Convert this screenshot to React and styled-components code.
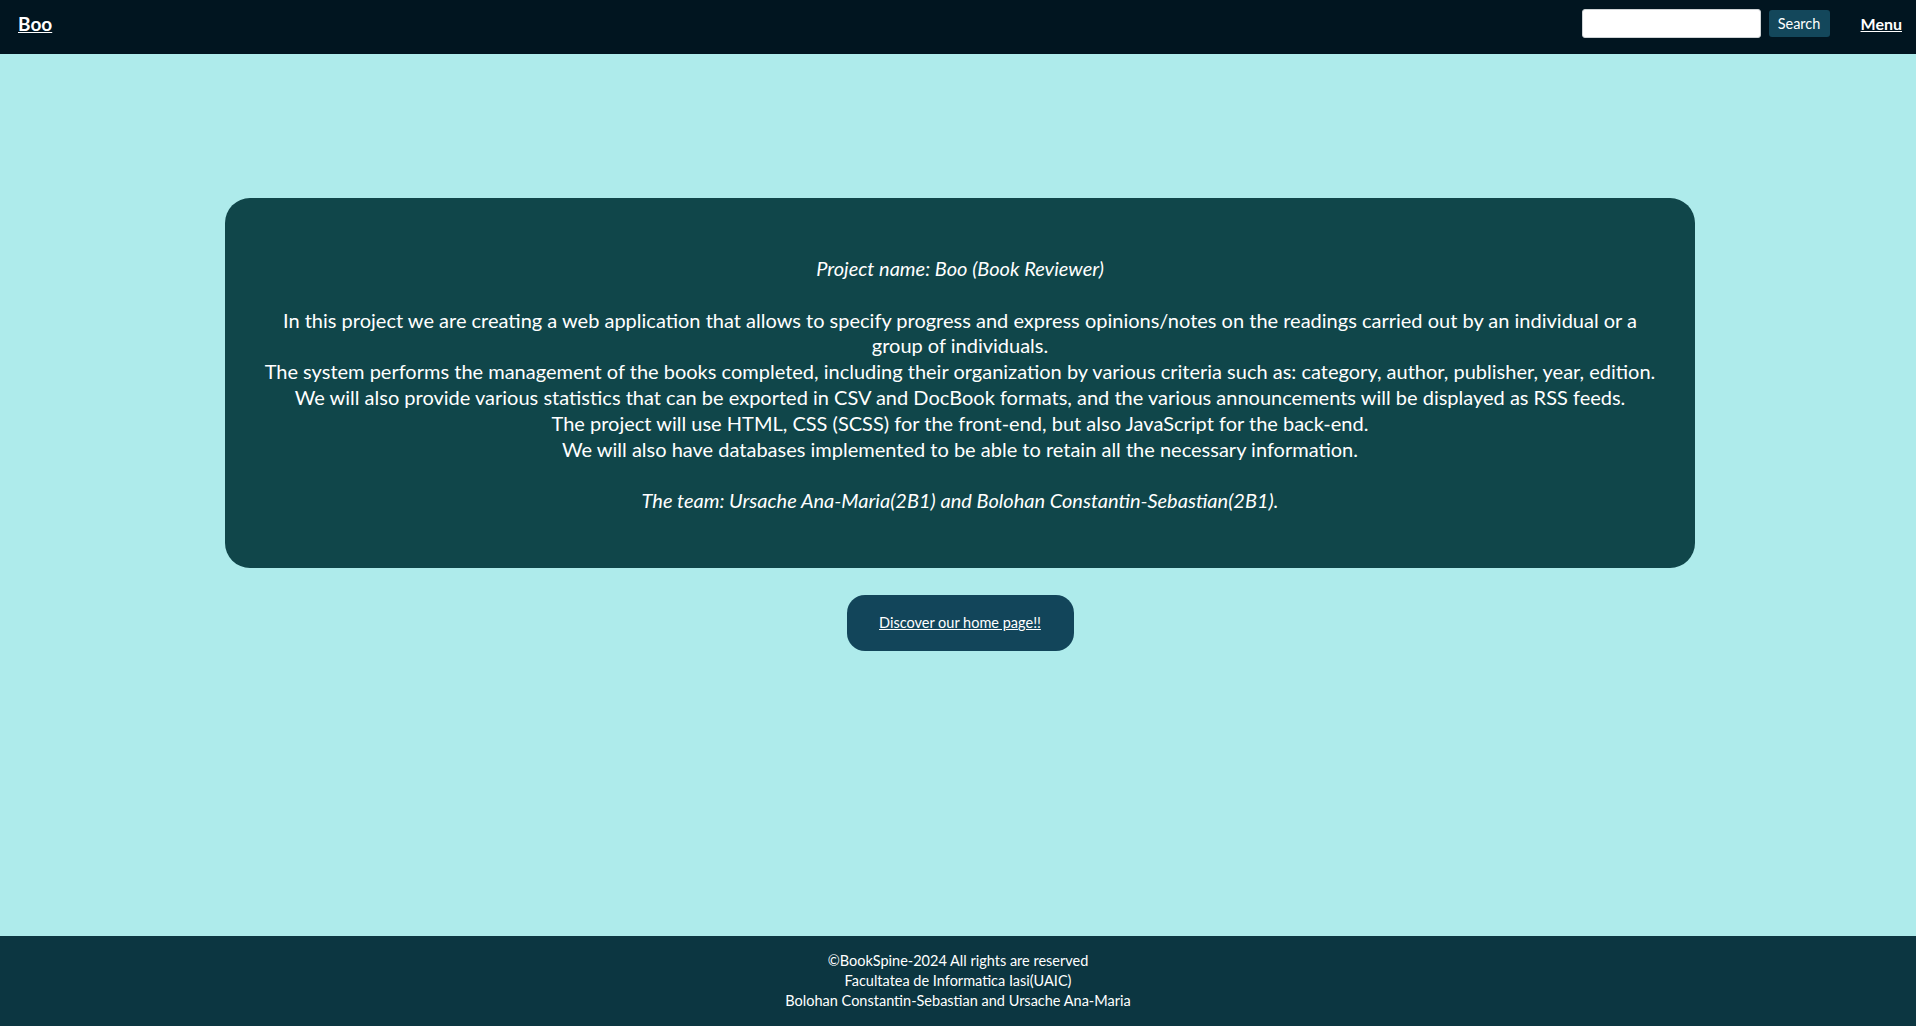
import React from 'react'
import styled, { createGlobalStyle } from 'styled-components'

const GlobalStyle = createGlobalStyle`
  * {
    box-sizing: border-box;
  }
  body {
    margin: 0;
    background: #aeebeb;
    font-family: 'Lato', 'Noto Sans', sans-serif;
    color: #ffffff;
  }
`

const Page = styled.div`
  display: flex;
  flex-direction: column;
  min-height: 100vh;
`

const Header = styled.header`
  height: 54px;
  background: #011520;
  display: flex;
  align-items: center;
  justify-content: space-between;
  padding: 0 14px 7px 18px;
`

const Brand = styled.a`
  color: #ffffff;
  font-weight: 700;
  font-size: 19px;
  text-decoration: underline;
`

const Tools = styled.div`
  display: flex;
  align-items: center;
`

const SearchInput = styled.input`
  width: 179px;
  height: 29px;
  border: 1px solid #cfd4d6;
  border-radius: 3px;
  background: #ffffff;
  margin-right: 8px;
`

const SearchButton = styled.button`
  width: 61px;
  height: 27px;
  border: none;
  border-radius: 3px;
  background: #13475b;
  color: #ffffff;
  font-family: inherit;
  font-size: 14.5px;
  margin-right: 31px;
`

const MenuLink = styled.a`
  color: #ffffff;
  font-weight: 700;
  font-size: 16px;
  text-decoration: underline;
`

const Main = styled.main`
  flex: 1;
  display: flex;
  flex-direction: column;
  align-items: center;
  padding: 144px 0 0 4px;
`

const Card = styled.section`
  width: 1470px;
  background: #10464a;
  border-radius: 25px;
  padding: 58px 30px 54px;
  text-align: center;
  font-size: 20px;
  line-height: 25.8px;
`

const Line = styled.span`
  display: block;
  font-style: ${(p) => (p.italic ? 'italic' : 'normal')};
  margin-bottom: ${(p) => (p.gap ? '25.8px' : '0')};
`

const Discover = styled.a`
  margin-top: 27px;
  width: 227px;
  height: 56px;
  border-radius: 18px;
  background: #12455a;
  display: flex;
  align-items: center;
  justify-content: center;
  color: #ffffff;
  font-size: 14.5px;
  text-decoration: underline;
`

const Footer = styled.footer`
  height: 90px;
  background: #0c3641;
  display: flex;
  flex-direction: column;
  align-items: center;
  justify-content: center;
  font-size: 14.5px;
  line-height: 20px;
`

const App = () => {
  return (
    <Page>
      <GlobalStyle />
      <Header>
        <Brand href='#'>Boo</Brand>
        <Tools>
          <SearchInput type='text' />
          <SearchButton type='button'>Search</SearchButton>
          <MenuLink href='#'>Menu</MenuLink>
        </Tools>
      </Header>
      <Main>
        <Card>
          <Line italic gap>
            Project name: Boo (Book Reviewer)
          </Line>
          <Line>
            In this project we are creating a web application that allows to
            specify progress and express opinions/notes on the readings carried
            out by an individual or a group of individuals.
          </Line>
          <Line>
            The system performs the management of the books completed,
            including their organization by various criteria such as: category,
            author, publisher, year, edition.
          </Line>
          <Line>
            We will also provide various statistics that can be exported in CSV
            and DocBook formats, and the various announcements will be displayed
            as RSS feeds.
          </Line>
          <Line>
            The project will use HTML, CSS (SCSS) for the front-end, but also
            JavaScript for the back-end.
          </Line>
          <Line gap>
            We will also have databases implemented to be able to retain all
            the necessary information.
          </Line>
          <Line italic>
            The team: Ursache Ana-Maria(2B1) and Bolohan
            Constantin-Sebastian(2B1).
          </Line>
        </Card>
        <Discover href='#'>Discover our home page!!</Discover>
      </Main>
      <Footer>
        <div>©BookSpine-2024 All rights are reserved</div>
        <div>Facultatea de Informatica Iasi(UAIC)</div>
        <div>Bolohan Constantin-Sebastian and Ursache Ana-Maria</div>
      </Footer>
    </Page>
  )
}

export default App
